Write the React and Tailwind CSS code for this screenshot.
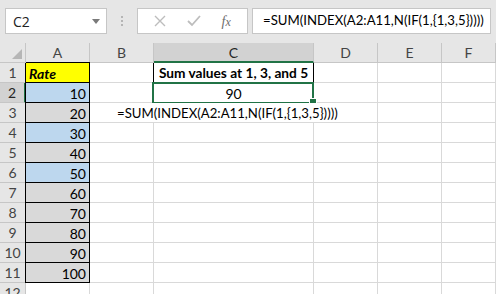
import React from 'react';

const font = { fontFamily: 'Lato, "Liberation Sans", sans-serif' };

const rates = [10, 20, 30, 40, 50, 60, 70, 80, 90, 100];
const blueRows = [0, 2, 4];
const formula = '=SUM(INDEX(A2:A11,N(IF(1,{1,3,5}))))';

const HeaderCell = ({ w, label, selected }) => (
  <div
    className={`${w} h-full flex items-center justify-center border-r border-[#c6c6c6] text-[14px] ${
      selected ? 'bg-[#d2d2d2] border-b-2 border-b-[#217346] text-[#262626]' : 'border-b border-b-[#c6c6c6] text-[#444]'
    }`}
  >
    {label}
  </div>
);

const RowHeader = ({ n, selected }) => (
  <div
    className={`w-[26px] shrink-0 h-full flex items-center justify-center text-[14px] border-b border-b-[#c6c6c6] ${
      selected ? 'bg-[#d2d2d2] border-r-2 border-r-[#217346] text-[#262626]' : 'bg-[#e6e6e6] border-r border-r-[#c6c6c6] text-[#444]'
    }`}
  >
    {n}
  </div>
);

const Grid = ({ className = '' }) => (
  <div className={`h-full border-r border-b border-[#d9d9d9] shrink-0 ${className}`} />
);

export default function App() {
  const rows = [];
  for (let i = 1; i <= 12; i++) {
    const val = i >= 2 && i <= 11 ? rates[i - 2] : null;
    const blue = val !== null && blueRows.includes(i - 2);

    let cellA;
    if (i === 1) {
      cellA = (
        <div className="w-[65px] -ml-px shrink-0 h-[21px] -mt-px bg-[#ffff00] border border-black flex items-center pt-[2px] px-[3px] font-bold italic text-[14px]">
          Rate
        </div>
      );
    } else if (val !== null) {
      cellA = (
        <div
          className={`w-[65px] -ml-px shrink-0 h-full border-x border-b border-black flex items-center justify-end pt-[2px] px-[3px] text-[14px] ${
            blue ? 'bg-[#bdd7ee]' : 'bg-[#d9d9d9]'
          }`}
        >
          {val}
        </div>
      );
    } else {
      cellA = <Grid className="w-[64px]" />;
    }

    let cellC;
    if (i === 1) {
      cellC = (
        <div className="w-[161px] -ml-px shrink-0 h-full border-x border-b border-black flex items-center justify-center pt-[2px] font-bold text-[13.7px]">
          Sum values at 1, 3, and 5
        </div>
      );
    } else if (i === 2) {
      cellC = (
        <div className="relative w-[160px] shrink-0 h-full border-r border-b border-[#d9d9d9] flex items-center justify-center pt-[2px] text-[14px]">
          90
          <div className="absolute -left-[2px] -top-px w-[162px] h-[22px] border-2 border-[#217346]" />
          <div className="absolute right-[-4px] bottom-[-4px] w-[6px] h-[6px] bg-[#217346] border border-white box-content" />
        </div>
      );
    } else {
      cellC = <Grid className="w-[160px]" />;
    }

    rows.push(
      <div key={i} className="flex h-[20px] shrink-0">
        <RowHeader n={i} selected={i === 2} />
        {cellA}
        {i === 3 ? (
          <div className="relative w-[64px] shrink-0 h-full border-r border-b border-[#d9d9d9]">
            <span className="absolute left-[27px] top-0 h-[19px] pt-[2px] flex items-center whitespace-nowrap text-[13.2px] bg-white z-10">
              {formula}
            </span>
          </div>
        ) : (
          <Grid className="w-[64px]" />
        )}
        {cellC}
        <Grid className="w-[64px]" />
        <Grid className="w-[64px]" />
        <Grid className="flex-1" />
      </div>
    );
  }

  return (
    <div className="w-[496px] h-[294px] overflow-hidden bg-white text-black" style={font}>
      {/* toolbar */}
      <div className="h-[43px] bg-[#e6e6e6] flex items-start pt-[8px] pl-[5px]">
        <div className="w-[102px] h-[26px] bg-white border border-[#c6c6c6] flex items-center justify-between pl-[7px] pr-[6px]">
          <span className="text-[14px] text-[#222]" style={{ fontFamily: '"Open Sans", sans-serif' }}>C2</span>
          <svg width="8" height="5" viewBox="0 0 8 5">
            <path d="M0 0h8L4 5z" fill="#7a7a7a" />
          </svg>
        </div>
        <div className="w-[30px] h-[26px] flex flex-col items-center justify-center gap-[2px]">
          <span className="w-[2px] h-[2px] bg-[#b5b5b5]" />
          <span className="w-[2px] h-[2px] bg-[#b5b5b5]" />
          <span className="w-[2px] h-[2px] bg-[#b5b5b5]" />
        </div>
        <div className="w-[111px] h-[26px] bg-white border border-[#c6c6c6] flex items-center justify-around px-[6px]">
          <svg width="12" height="12" viewBox="0 0 12 12">
            <path d="M1 1l10 10M11 1L1 11" stroke="#bdbdbd" strokeWidth="1.4" />
          </svg>
          <svg width="14" height="12" viewBox="0 0 14 12">
            <path d="M1 6l4 4 8-9" stroke="#bdbdbd" strokeWidth="1.8" fill="none" />
          </svg>
          <span className="text-[14px] italic text-[#6d6d6d]" style={{ fontFamily: '"Liberation Serif", serif' }}>
            f<span className="text-[12px]">x</span>
          </span>
        </div>
        <div className="w-[4px]" />
        <div className="flex-1 mr-[5px] h-[26px] bg-white border border-[#c6c6c6] flex items-center pl-[10px] text-[13.2px] whitespace-nowrap overflow-hidden">
          {formula}
        </div>
      </div>

      {/* column headers */}
      <div className="flex h-[20px] bg-[#e6e6e6]">
        <div className="relative w-[26px] shrink-0 h-full border-r border-b border-[#c6c6c6]">
          <svg className="absolute right-[3px] bottom-[3px]" width="10" height="10" viewBox="0 0 10 10">
            <path d="M10 0v10H0z" fill="#b6b6b6" />
          </svg>
        </div>
        <HeaderCell w="w-[64px] shrink-0" label="A" />
        <HeaderCell w="w-[64px] shrink-0" label="B" />
        <HeaderCell w="w-[160px] shrink-0" label="C" selected />
        <HeaderCell w="w-[64px] shrink-0" label="D" />
        <HeaderCell w="w-[64px] shrink-0" label="E" />
        <HeaderCell w="flex-1" label="F" />
      </div>

      {rows}
    </div>
  );
}
